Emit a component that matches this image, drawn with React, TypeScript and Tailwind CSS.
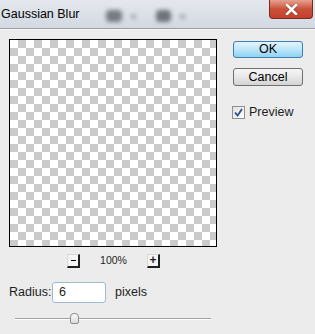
import React from 'react';

export default function App() {
  return (
    <div className="w-[315px] h-[334px] bg-[#ececec] flex flex-col overflow-hidden font-['Liberation_Sans',Arial,sans-serif] text-[#1e1e1e]">
      {/* Title bar */}
      <div className="h-[28px] flex items-start bg-gradient-to-b from-[#e4e8ee] to-[#d3d9e1] relative">
        <span className="text-[12.5px] text-black leading-none pt-[8px] pl-[1px]">Gaussian Blur</span>
        {/* blurred toolbar icons behind glass */}
        <div className="flex items-center gap-[9px] ml-[26px] mt-[10px] blur-[2px]">
          <div className="w-[16px] h-[12px] bg-[#777b82] rounded-sm" />
          <div className="w-[5px] h-[5px] bg-[#9ba0a8] rounded-full" />
        </div>
        <div className="flex items-center gap-[9px] ml-[20px] mt-[10px] blur-[2px]">
          <div className="w-[15px] h-[12px] bg-[#6f737a] rounded-sm" />
          <div className="w-[5px] h-[5px] bg-[#9ba0a8] rounded-full" />
        </div>
        {/* close button */}
        <div className="absolute right-[2px] top-0 w-[44px] h-[19px] rounded-b-[4px] border border-t-0 border-[#7a2a20] bg-gradient-to-b from-[#e7a08f] via-[#c9513a] to-[#c4402b] flex items-center justify-center">
          <svg width="13" height="11" viewBox="0 0 13 11">
            <path d="M2 1 L11 10 M11 1 L2 10" stroke="#3a1410" strokeWidth="4" strokeLinecap="round" opacity="0.35" />
            <path d="M2 1 L11 10 M11 1 L2 10" stroke="#ffffff" strokeWidth="2.6" strokeLinecap="square" />
          </svg>
        </div>
      </div>
      <div className="h-px bg-[#9a9da2]" />
      <div className="h-px bg-[#f7f7f7]" />

      {/* Body */}
      <div className="flex pl-[9px] pt-[9px] gap-[16px]">
        {/* Left column */}
        <div className="w-[208px] flex flex-col">
          <div className="w-[208px] h-[208px] border border-black bg-[repeating-conic-gradient(#cbcbcb_0_25%,#ffffff_0_50%)] bg-[length:16px_16px]" />

          <div className="flex items-center mt-[6px] pl-[58px]">
            <div className="w-[13px] h-[14px] bg-[#f4f4f4] border-l border-t border-[#d8d8d8] border-r-[2px] border-r-[#202020] border-b-[2px] border-b-[#202020] flex items-center justify-center">
              <div className="w-[5px] h-px bg-black mt-[1px]" />
            </div>
            <span className="text-[10.5px] w-[67px] text-center">100%</span>
            <div className="w-[13px] h-[14px] bg-[#f4f4f4] border-l border-t border-[#d8d8d8] border-r-[2px] border-r-[#202020] border-b-[2px] border-b-[#202020] flex items-center justify-center">
              <span className="text-[12px] leading-none font-bold">+</span>
            </div>
          </div>

          <div className="flex items-center mt-[13px]">
            <span className="text-[12.5px] w-[43px]">Radius:</span>
            <div className="w-[54px] h-[21px] rounded-[3px] border border-[#9fb9d2] bg-white flex items-center pl-[6px] text-[12.5px]">
              6
            </div>
            <span className="text-[12.5px] ml-[9px]">pixels</span>
          </div>

          <div className="relative mt-[10px] ml-[6px] w-[196px] h-[12px]">
            <div className="absolute left-0 right-0 top-[5px] h-px bg-[#a3a3a3]" />
            <div className="absolute left-0 right-0 top-[6px] h-px bg-white" />
            <div className="absolute left-[55px] top-0 w-[9px] h-[11px] rounded-t-[4px] rounded-b-[2px] border border-[#8c8c8c] bg-gradient-to-b from-[#fafafa] to-[#dcdcdc]" />
          </div>
        </div>

        {/* Right column */}
        <div className="flex flex-col pt-[2px]">
          <button className="w-[70px] h-[17px] rounded-[3px] border border-[#3c7fb1] bg-gradient-to-b from-[#e3f4fc] via-[#bde6fa] to-[#8fd2f1] text-[12.5px] leading-none text-black">
            OK
          </button>
          <button className="w-[70px] h-[18px] mt-[10px] rounded-[3px] border border-[#707070] bg-gradient-to-b from-[#f6f6f6] via-[#e8e8e8] to-[#d3d3d3] text-[12.5px] leading-none text-black">
            Cancel
          </button>
          <div className="flex items-center mt-[17px] -ml-[1px]">
            <div className="w-[13px] h-[13px] border border-[#8e8f8f] bg-gradient-to-br from-[#e0e0e0] to-white flex items-center justify-center">
              <svg width="9" height="9" viewBox="0 0 9 9">
                <path d="M1 4.5 L3.6 7.5 L8 1" fill="none" stroke="#2d4f8a" strokeWidth="1.8" />
              </svg>
            </div>
            <span className="text-[12.5px] ml-[4px]">Preview</span>
          </div>
        </div>
      </div>
    </div>
  );
}
